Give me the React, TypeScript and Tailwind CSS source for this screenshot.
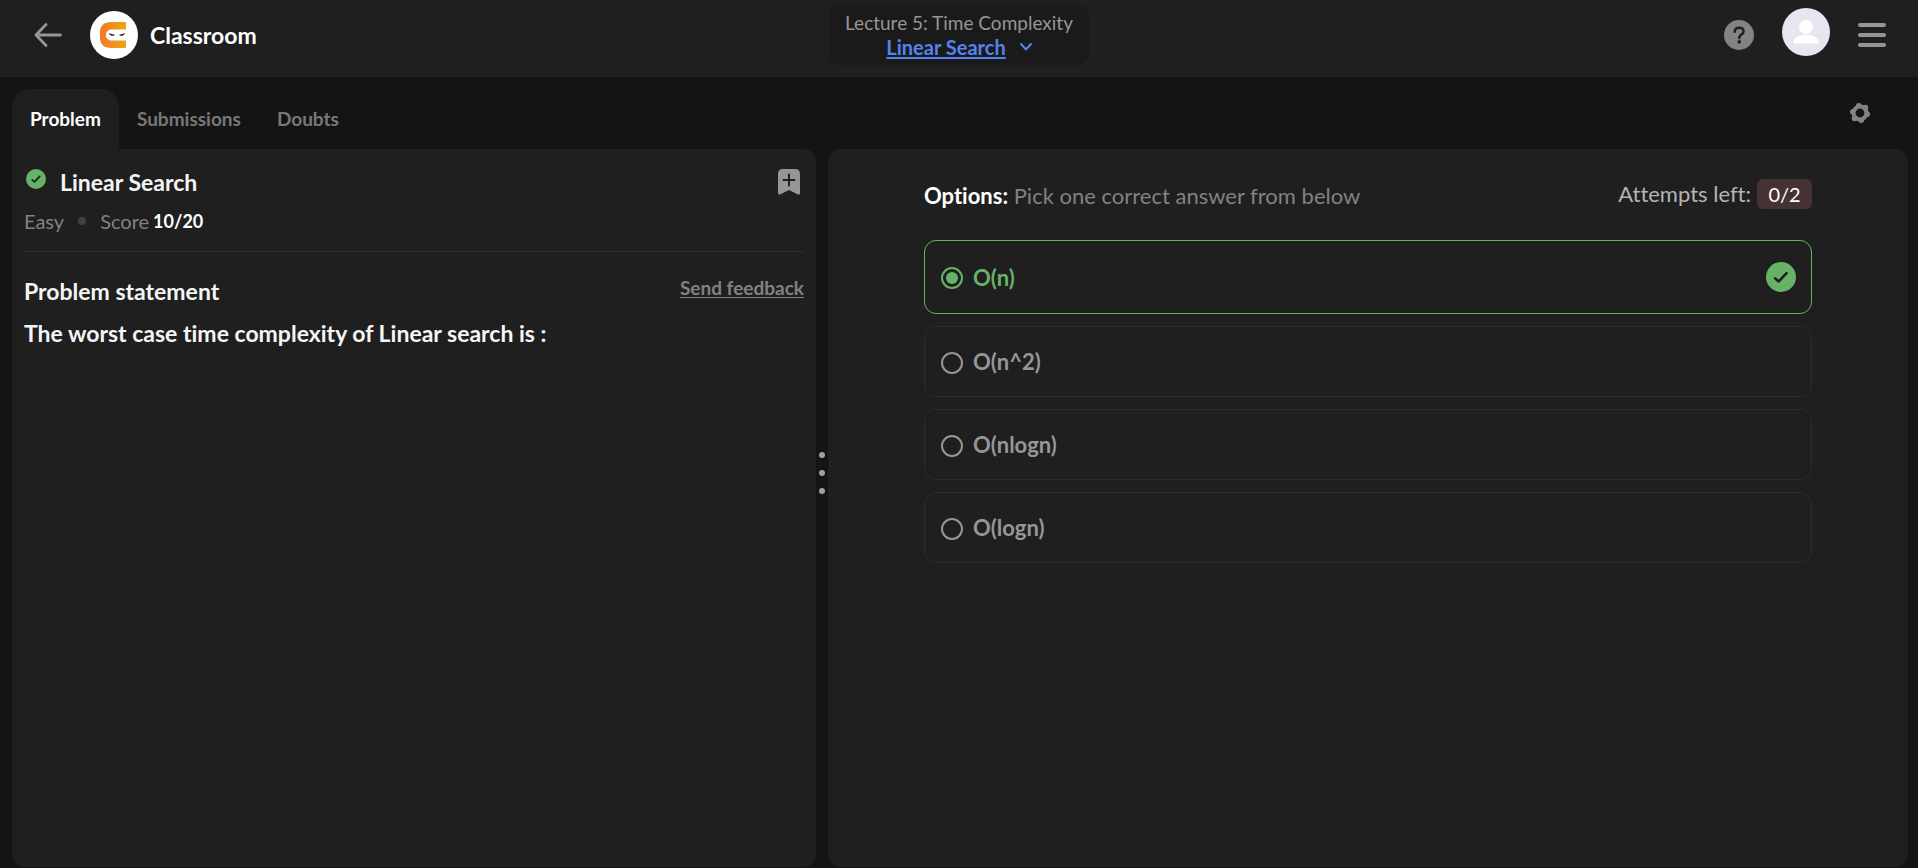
import React, { useState } from "react";

const tabs = ["Problem", "Submissions", "Doubts"];
const options = ["O(n)", "O(n^2)", "O(nlogn)", "O(logn)"];
const correct = 0;

function CheckBadge({ className }: { className: string }) {
  return (
    <svg viewBox="0 0 30 30" className={className} aria-hidden="true">
      <circle cx="15" cy="15" r="15" fill="#66b266" />
      <path d="M9.2 16.4 L12.800 19.400 L20.600 11.200" fill="none" stroke="#1f1f1f" strokeWidth="2.6" strokeLinecap="round" strokeLinejoin="round" />
    </svg>
  );
}

function Logo() {
  return (
    <svg viewBox="0 0 48 48" className="size-12" aria-hidden="true">
      <defs>
        <linearGradient id="brand" x1="0" x2="1">
          <stop offset="0" stopColor="#f0782c" />
          <stop offset="1" stopColor="#f1a511" />
        </linearGradient>
      </defs>
      <circle cx="24" cy="24" r="24" fill="#fff" />
      <path d="M36 11 H21 C14 11 10 15 10 21 V27 C10 33 14 37 21 37 H36 V29.500 H22 C18.500 29.500 16 27.500 16 24 C16 20.500 18.500 18.500 22 18.500 H36 Z" fill="url(#brand)" />
      <path d="M18.800 22.300 L24.800 23.800 C24.500 25.200 20.500 25.600 18.800 22.300 Z M35.200 22.300 L29.200 23.800 C29.500 25.200 33.500 25.600 35.200 22.300 Z" fill="#231f20" />
    </svg>
  );
}

function Header() {
  return (
    <header className="grid grid-cols-[1fr_auto_1fr] items-start bg-[#1f1f1f] pr-8 pb-3 pl-8">
      <div className="flex items-center gap-[26px] pt-[11px]">
        <button type="button" aria-label="Back" className="flex h-12 w-8 items-center justify-center">
          <svg viewBox="0 0 28 24" className="h-6 w-7" fill="none" stroke="#969696" strokeWidth="2.8" strokeLinecap="round" strokeLinejoin="round">
            <path d="M12 1.500 L2 12 L12 22.500 M2 12 H26.500" />
          </svg>
        </button>
        <a href="#classroom" className="flex items-center gap-3">
          <Logo />
          <span className="text-[23px] font-bold text-white">Classroom</span>
        </a>
      </div>
      <div className="mt-[5px] flex h-[60px] w-[260px] flex-col items-center rounded-xl bg-[#1a1a1a] pt-[6px]">
        <span className="text-[19px] leading-6 text-[#969696]">Lecture 5: Time Complexity</span>
        <button type="button" className="flex items-center gap-[14px] text-xl leading-6 font-bold text-[#5483f0]">
          <span className="underline underline-offset-2">Linear Search</span>
          <svg viewBox="0 0 12 8" className="h-2 w-3" fill="none" stroke="currentColor" strokeWidth="2" strokeLinecap="round" strokeLinejoin="round">
            <path d="M1 1 L6 6.500 L11 1" />
          </svg>
        </button>
      </div>
      <div className="flex items-start justify-end gap-7 pt-2">
        <button type="button" aria-label="Help" className="flex h-[54px] items-center">
          <svg viewBox="0 0 30 30" className="size-[30px]">
            <circle cx="15" cy="15" r="15" fill="#828383" />
            <path d="M10.700 11.600 C10.900 9.100 12.600 7.800 15.100 7.800 C17.700 7.800 19.500 9.200 19.500 11.400 C19.500 14.600 15.200 14.500 15.200 18" fill="none" stroke="#1f1f1f" strokeWidth="2.600" strokeLinecap="round" />
            <circle cx="15.200" cy="21.900" r="1.800" fill="#1f1f1f" />
          </svg>
        </button>
        <button type="button" aria-label="Profile">
          <svg viewBox="0 0 48 48" className="size-12">
            <circle cx="24" cy="24" r="24" fill="#e6e6f0" />
            <circle cx="24" cy="19" r="7" fill="#fff" />
            <path d="M11.500 35.600 V33.500 C12.500 29 17 27 24 27 C31 27 35.500 29 36.500 33.500 V35.600 Z" fill="#fff" />
          </svg>
        </button>
        <button type="button" aria-label="Menu" className="flex h-[54px] w-7 flex-col justify-center gap-[6px]">
          <span className="h-1 w-7 rounded-sm bg-[#969696]" />
          <span className="h-1 w-7 rounded-sm bg-[#969696]" />
          <span className="h-1 w-7 rounded-sm bg-[#969696]" />
        </button>
      </div>
    </header>
  );
}

function GearIcon() {
  return (
    <svg viewBox="0 0 20 20" className="size-5" aria-hidden="true">
      <g fill="#828383">
        <circle cx="10" cy="10" r="8.400" />
        <circle cx="8.800" cy="2.900" r="2.900" />
        <circle cx="15.400" cy="4.700" r="2.900" />
        <circle cx="17.100" cy="11.200" r="2.900" />
        <circle cx="11.200" cy="17.100" r="2.900" />
        <circle cx="4.600" cy="15.300" r="2.900" />
        <circle cx="2.900" cy="8.800" r="2.900" />
      </g>
      <circle cx="10" cy="10" r="4.400" fill="#141414" />
    </svg>
  );
}

function TabBar() {
  return (
    <div className="flex justify-between pt-3 pr-12 pl-3">
      <nav className="flex">
        {tabs.map((tab, i) => (
          <button
            key={tab}
            type="button"
            className={`h-[60px] rounded-t-[18px] px-[18px] text-[19px] font-bold ${i === 0 ? "bg-[#1f1f1f] text-white" : "text-[#787878]"}`}
          >
            {tab}
          </button>
        ))}
      </nav>
      <button type="button" aria-label="Settings" className="flex h-[47px] items-center">
        <GearIcon />
      </button>
    </div>
  );
}

function ProblemPanel() {
  return (
    <section className="min-w-0 rounded-tr-xl rounded-b-xl bg-[#1f1f1f] px-3 pt-5">
      <div className="flex items-start justify-between border-b border-[#2c2c2c] pb-[18px]">
        <div>
          <div className="flex items-start gap-[14px] pl-[2px]">
            <CheckBadge className="size-5" />
            <h1 className="text-[23px] leading-[26px] font-bold text-[#f5f5f5]">Linear Search</h1>
          </div>
          <p className="mt-[14px] flex items-center text-xl leading-6 text-[#828282]">
            Easy
            <span className="mx-[14px] size-2 rounded-full bg-[#414141]" />
            Score <b className="ml-1 text-lg leading-6 font-bold text-white">10/20</b>
          </p>
        </div>
        <button type="button" aria-label="Bookmark" className="mr-1">
          <svg viewBox="0 0 22 26" className="h-[26px] w-[22px]">
            <path d="M5 0 H17 Q22 0 22 5 V24 Q22 26 20 25.600 L11 21 L2 25.600 Q0 26 0 24 V5 Q0 0 5 0 Z" fill="#969696" />
            <path d="M11 5.500 V16.500 M5.500 11 H16.500" stroke="#1f1f1f" strokeWidth="2" strokeLinecap="round" />
          </svg>
        </button>
      </div>
      <div className="flex items-start justify-between pt-6">
        <h2 className="text-[23px] leading-[30px] font-bold text-[#f5f5f5]">Problem statement</h2>
        <a href="#feedback" className="text-[19px] leading-6 font-bold text-[#828282] underline underline-offset-2">Send feedback</a>
      </div>
      <p className="mt-3 text-[23px] leading-[30px] font-bold text-[#f5f5f5]">The worst case time complexity of Linear search is :</p>
    </section>
  );
}

function OptionsPanel() {
  const [picked, setPicked] = useState(correct);
  return (
    <section className="min-w-0 rounded-xl bg-[#1f1f1f] px-24 pt-[30px]">
      <div className="flex items-start justify-between">
        <p className="pt-px text-[22px] leading-8 text-[#828282]">
          <b className="font-bold text-white">Options:</b> Pick one correct answer from below
        </p>
        <p className="flex items-center gap-[6px] text-[22px] leading-[30px] text-[#b4b4b4]">
          Attempts left:
          <span className="w-[55px] rounded-md bg-[#463234] text-center text-xl leading-[30px] text-white">0/2</span>
        </p>
      </div>
      <fieldset className="mt-7 flex flex-col gap-3">
        {options.map((option, i) => {
          const active = i === picked;
          return (
            <label
              key={option}
              className={`flex items-center gap-[10px] rounded-xl border px-4 text-[22px] font-bold ${active ? "h-[74px] border-[#66b266] pr-[15px] text-[#66b266]" : "h-[71px] border-[#2c2c2c] text-[#969696]"}`}
            >
              <input
                type="radio"
                name="answer"
                checked={active}
                onChange={() => setPicked(i)}
                className={`mt-[2px] size-[22px] appearance-none rounded-full border-2 border-current ${active ? "bg-current bg-clip-content p-[3px]" : ""}`}
              />
              {option}
              {active && <CheckBadge className="ml-auto size-[30px]" />}
            </label>
          );
        })}
      </fieldset>
    </section>
  );
}

export default function App() {
  return (
    <div className="flex min-h-screen flex-col bg-[#141414] font-['Lato','Liberation_Sans',sans-serif] [font-variant-ligatures:none]">
      <Header />
      <TabBar />
      <main className="grid flex-1 grid-cols-[804fr_12px_1080fr] pr-[10px] pb-px pl-3">
        <ProblemPanel />
        <div className="flex flex-col items-center justify-center gap-3 pb-[70px]">
          <span className="size-[6px] rounded-full bg-[#a0a0a0]" />
          <span className="size-[6px] rounded-full bg-[#a0a0a0]" />
          <span className="size-[6px] rounded-full bg-[#a0a0a0]" />
        </div>
        <OptionsPanel />
      </main>
    </div>
  );
}
